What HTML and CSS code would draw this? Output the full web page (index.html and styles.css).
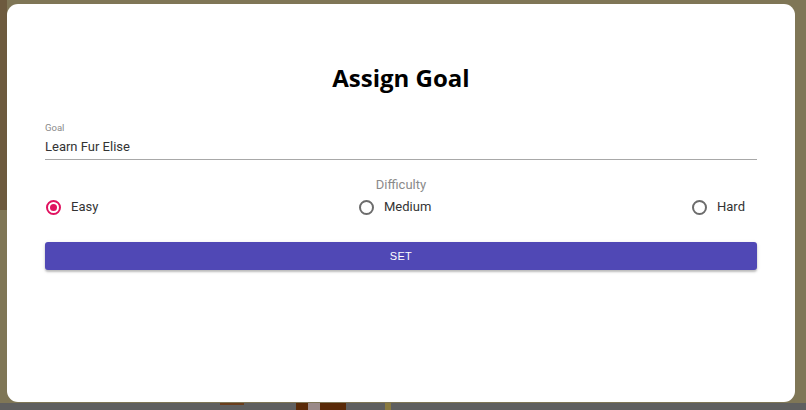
FILE: index.html
```html
<!DOCTYPE html>
<html>
<head>
<meta charset="utf-8">
<link rel="stylesheet" href="styles.css">
</head>
<body>
<div class="backdrop">
  <div class="bg-top">
    <div class="bg-left"></div>
    <div class="bg-main"></div>
  </div>
  <div class="bg-bottom">
    <span class="blob b1"></span>
    <span class="blob b2"></span>
    <span class="blob b3"></span>
    <span class="blob b4"></span>
    <span class="blob b5"></span>
  </div>
  <div class="dialog">
    <h1 class="title">Assign Goal</h1>
    <div class="field">
      <label class="field-label">Goal</label>
      <div class="field-input">Learn Fur Elise</div>
    </div>
    <div class="difficulty">
      <div class="legend">Difficulty</div>
      <div class="radios">
        <label class="radio checked"><span class="circle"><span class="dot"></span></span>Easy</label>
        <label class="radio"><span class="circle"></span>Medium</label>
        <label class="radio"><span class="circle"></span>Hard</label>
      </div>
    </div>
    <button class="set-btn">SET</button>
  </div>
</div>
</body>
</html>
```
FILE: styles.css
```css
html, body {
  margin: 0;
  padding: 0;
}
body {
  width: 806px;
  height: 410px;
  overflow: hidden;
  font-family: Roboto, "Liberation Sans", sans-serif;
}
.backdrop {
  position: relative;
  width: 806px;
  height: 410px;
  display: flex;
  flex-direction: column;
}
.bg-top {
  flex: 1;
  display: flex;
  background: #7f7656;
}
.bg-left {
  width: 7px;
  height: 210px;
  background: #6d5a3e;
}
.bg-main {
  flex: 1;
}
.bg-bottom {
  height: 7px;
  background: #5f5f5f;
  position: relative;
}
.blob {
  position: absolute;
  top: 0;
  height: 7px;
}
.b1 { left: 220px; width: 24px; height: 2px; background: #6a3d1c; }
.b2 { left: 296px; width: 12px; background: #5a2a08; }
.b3 { left: 308px; width: 12px; background: #9a8a88; }
.b4 { left: 320px; width: 26px; background: #5a2a08; }
.b5 { left: 385px; width: 6px; background: #8a7a40; }
.dialog {
  position: absolute;
  left: 7px;
  top: 4px;
  width: 788px;
  height: 398px;
  background: #ffffff;
  border-radius: 11px;
  box-sizing: border-box;
  padding: 0 38px;
  display: flex;
  flex-direction: column;
}
.title {
  margin: 57px 0 0;
  text-align: center;
  font-family: "Open Sans", "Noto Sans", sans-serif;
  font-weight: 700;
  font-size: 24px;
  line-height: 34px;
  color: #000;
}
.field {
  margin-top: 27px;
  display: flex;
  flex-direction: column;
}
.field-label {
  font-size: 9.5px;
  line-height: 12px;
  color: #8a8a8a;
}
.field-input {
  margin-top: 4px;
  font-size: 13px;
  line-height: 17px;
  color: #333;
  padding-bottom: 4px;
  border-bottom: 1px solid #a8a8a8;
}
.difficulty {
  margin-top: 17px;
  display: flex;
  flex-direction: column;
}
.legend {
  text-align: center;
  font-size: 13px;
  line-height: 16px;
  color: #8a8a8a;
}
.radios {
  margin-top: 5px;
  display: flex;
  justify-content: space-between;
  padding-right: 12px;
  padding-left: 1px;
}
.radio {
  display: flex;
  align-items: center;
  gap: 10px;
  font-size: 13px;
  line-height: 18px;
  color: #333;
}
.circle {
  width: 11px;
  height: 11px;
  border: 2px solid #6c6c6c;
  border-radius: 50%;
  display: flex;
  align-items: center;
  justify-content: center;
}
.radio.checked .circle {
  border-color: #e0115f;
}
.dot {
  width: 7px;
  height: 7px;
  border-radius: 50%;
  background: #e0115f;
}
.set-btn {
  margin-top: 26px;
  height: 28px;
  border: none;
  border-radius: 3px;
  background: #5048b5;
  color: #fff;
  font-family: "Liberation Sans", Arial, sans-serif;
  font-size: 11px;
  font-weight: 400;
  letter-spacing: 0.3px;
  box-shadow: 0 2px 2px rgba(0,0,0,0.2), 0 1px 4px rgba(0,0,0,0.12);
}
```
